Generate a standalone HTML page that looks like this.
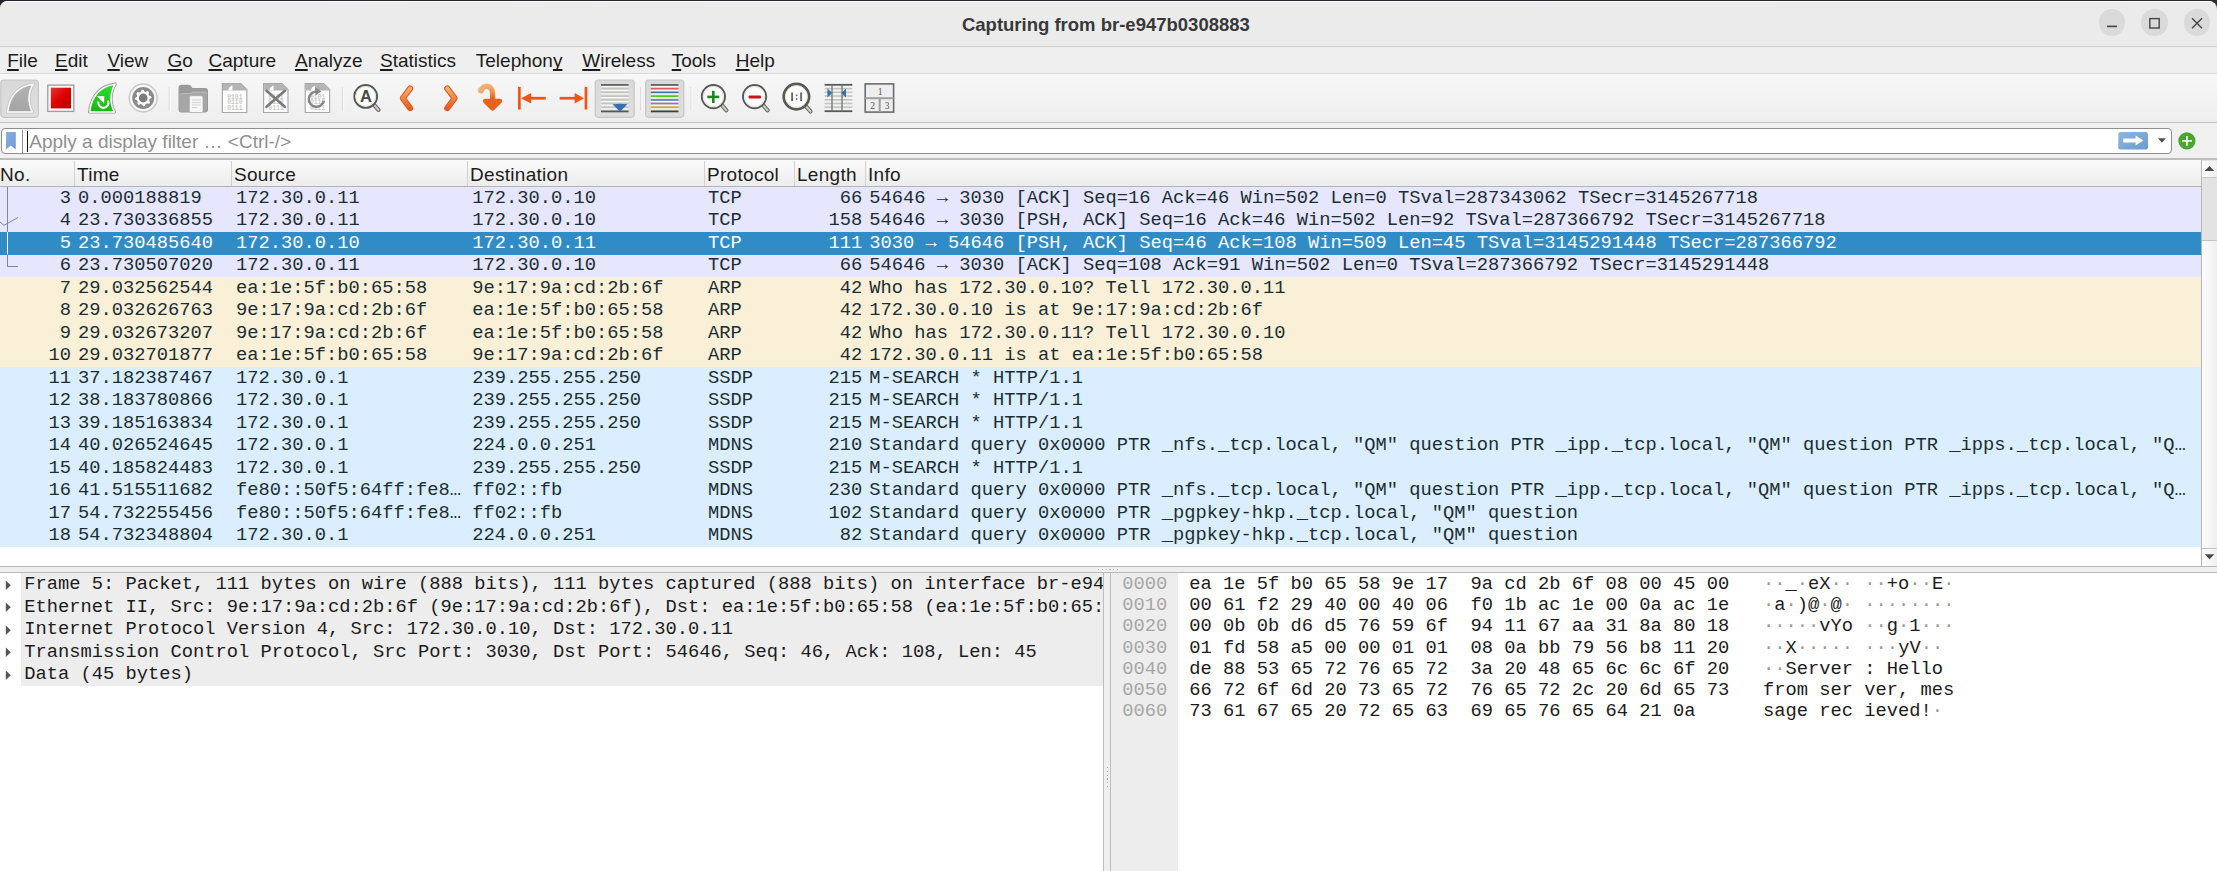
<!DOCTYPE html><html><head><meta charset="utf-8"><style>
*{margin:0;padding:0;box-sizing:border-box}
html,body{width:2217px;height:871px;overflow:hidden;background:linear-gradient(90deg,#20232f,#26272f 50%,#2a2a2a)}
#win{position:absolute;left:0;top:0;width:2217px;height:871px;overflow:hidden}
.ui{font-family:'Liberation Sans', sans-serif;font-size:19px;color:#1c1c1c;line-height:22px}
.mono{font-family:'Liberation Mono', monospace;font-size:18.75px;line-height:22.5px;white-space:pre}
.row{position:absolute;left:0;width:2201px;height:22.5px;color:#12272e}
.row span{position:absolute;top:-0.4px}
.u{text-decoration:underline;text-decoration-thickness:2.2px;text-underline-offset:2.2px;text-decoration-skip-ink:none}
</style></head><body><div id="win">
<div style="position:absolute;left:0px;top:20px;width:2217px;height:851px;background:#efefef"></div>
<div style="position:absolute;left:0px;top:1px;width:2217px;height:45px;background:#ebebeb;border-top:1px solid #ffffff;border-radius:7px 8px 0 0"></div>
<div style="position:absolute;left:0px;top:46px;width:2217px;height:1px;background:#cfcfcf"></div>
<div style="position:absolute;left:-2.6px;top:14.4px;white-space:pre;width:2217px;text-align:center;font-family:'Liberation Sans', sans-serif;font-weight:bold;font-size:18.5px;color:#383838;line-height:22px">Capturing from br-e947b0308883</div>
<div style="position:absolute;left:2098.8px;top:9.400000000000002px;width:26.4px;height:26.4px;border-radius:50%;background:#dadada"></div>
<div style="position:absolute;left:2141.3px;top:9.400000000000002px;width:26.4px;height:26.4px;border-radius:50%;background:#dadada"></div>
<div style="position:absolute;left:2183.8px;top:9.400000000000002px;width:26.4px;height:26.4px;border-radius:50%;background:#dadada"></div>
<svg style="position:absolute;left:0;top:0" width="2217" height="46"><rect x="2107" y="25.6" width="10" height="1.6" fill="#454545"/><rect x="2149.8" y="18.6" width="9.4" height="9.4" fill="none" stroke="#454545" stroke-width="1.4"/><path d="M2192 18.3 L2202 28.3 M2202 18.3 L2192 28.3" stroke="#454545" stroke-width="1.4"/></svg>
<div style="position:absolute;left:7.2px;top:50px;white-space:pre;font-family:'Liberation Sans', sans-serif;font-size:19px;color:#1c1c1c;line-height:22px"><span class="u">F</span>ile</div>
<div style="position:absolute;left:55px;top:50px;white-space:pre;font-family:'Liberation Sans', sans-serif;font-size:19px;color:#1c1c1c;line-height:22px"><span class="u">E</span>dit</div>
<div style="position:absolute;left:107.4px;top:50px;white-space:pre;font-family:'Liberation Sans', sans-serif;font-size:19px;color:#1c1c1c;line-height:22px"><span class="u">V</span>iew</div>
<div style="position:absolute;left:167.5px;top:50px;white-space:pre;font-family:'Liberation Sans', sans-serif;font-size:19px;color:#1c1c1c;line-height:22px"><span class="u">G</span>o</div>
<div style="position:absolute;left:208.5px;top:50px;white-space:pre;font-family:'Liberation Sans', sans-serif;font-size:19px;color:#1c1c1c;line-height:22px"><span class="u">C</span>apture</div>
<div style="position:absolute;left:295px;top:50px;white-space:pre;font-family:'Liberation Sans', sans-serif;font-size:19px;color:#1c1c1c;line-height:22px"><span class="u">A</span>nalyze</div>
<div style="position:absolute;left:380px;top:50px;white-space:pre;font-family:'Liberation Sans', sans-serif;font-size:19px;color:#1c1c1c;line-height:22px"><span class="u">S</span>tatistics</div>
<div style="position:absolute;left:475.8px;top:50px;white-space:pre;font-family:'Liberation Sans', sans-serif;font-size:19px;color:#1c1c1c;line-height:22px">Telephon<span class="u">y</span></div>
<div style="position:absolute;left:582.3px;top:50px;white-space:pre;font-family:'Liberation Sans', sans-serif;font-size:19px;color:#1c1c1c;line-height:22px"><span class="u">W</span>ireless</div>
<div style="position:absolute;left:671.7px;top:50px;white-space:pre;font-family:'Liberation Sans', sans-serif;font-size:19px;color:#1c1c1c;line-height:22px"><span class="u">T</span>ools</div>
<div style="position:absolute;left:735.7px;top:50px;white-space:pre;font-family:'Liberation Sans', sans-serif;font-size:19px;color:#1c1c1c;line-height:22px"><span class="u">H</span>elp</div>
<div style="position:absolute;left:0px;top:73px;width:2217px;height:1px;background:#dadada"></div>
<div style="position:absolute;left:0px;top:74px;width:2217px;height:48px;background:linear-gradient(#f7f7f7,#eeeeee)"></div>
<div style="position:absolute;left:0px;top:122px;width:2217px;height:1px;background:#c2c2c2"></div>
<svg style="position:absolute;left:0;top:0" width="910" height="123"><defs><linearGradient id="gfin" x1="0" y1="0" x2="0" y2="1"><stop offset="0" stop-color="#b3b3b3"/><stop offset="1" stop-color="#a4a4a4"/></linearGradient><linearGradient id="ggreen" x1="0" y1="0" x2="0" y2="1"><stop offset="0" stop-color="#2ee02a"/><stop offset="1" stop-color="#14b814"/></linearGradient><linearGradient id="gred" x1="0" y1="0" x2="1" y2="1"><stop offset="0" stop-color="#e83434"/><stop offset="0.5" stop-color="#dd0000"/><stop offset="1" stop-color="#b80000"/></linearGradient><linearGradient id="gor" x1="0" y1="0" x2="0" y2="1"><stop offset="0" stop-color="#f4b070"/><stop offset="1" stop-color="#e85c1c"/></linearGradient><linearGradient id="gbtn" x1="0" y1="0" x2="0" y2="1"><stop offset="0" stop-color="#d9d9d9"/><stop offset="1" stop-color="#dedede"/></linearGradient></defs><rect x="0.8" y="80" width="37.6" height="37.3" rx="3.2" fill="url(#gbtn)" stroke="#c6c6c6" stroke-width="1.2"/><rect x="595.2" y="80" width="39.0" height="37.3" rx="3.2" fill="url(#gbtn)" stroke="#c6c6c6" stroke-width="1.2"/><rect x="645.6" y="80" width="38.19999999999993" height="37.3" rx="3.2" fill="url(#gbtn)" stroke="#c6c6c6" stroke-width="1.2"/><path d="M7.6,111.9 C9.5,96 17,86.5 33.2,84.2 C28.2,92 27.4,103 32.4,111.9 Z" fill="none" stroke="#c4c4c4" stroke-width="3.2" stroke-linejoin="round"/><path d="M7.6,111.9 C9.5,96 17,86.5 33.2,84.2 C28.2,92 27.4,103 32.4,111.9 Z" fill="url(#gfin)" stroke="#ffffff" stroke-width="1.5" stroke-linejoin="round"/><rect x="47.8" y="85.1" width="26" height="26.3" fill="#fbfbfb" stroke="#9c9c9c" stroke-width="1.3"/><rect x="50.8" y="87.7" width="20.2" height="20.7" fill="url(#gred)"/><path d="M89.6,111.9 C91.5,96 99,86.5 115.2,84.2 C110.2,92 109.4,103 114.4,111.9 Z" fill="none" stroke="#9a9a9a" stroke-width="3.2" stroke-linejoin="round"/><path d="M89.6,111.9 C91.5,96 99,86.5 115.2,84.2 C110.2,92 109.4,103 114.4,111.9 Z" fill="url(#ggreen)" stroke="#ffffff" stroke-width="1.5" stroke-linejoin="round"/><path d="M98.4,101.6 A5.1,5.1 0 1 0 107.9,100.4" fill="none" stroke="#ffffff" stroke-width="2.1"/><path d="M96.9,96.3 L104.3,95.9 L104.1,103.2 Z" fill="#ffffff"/><circle cx="143.2" cy="98" r="13.9" fill="#fafafa" stroke="#c8c8c8" stroke-width="1.5"/><circle cx="143.2" cy="98" r="11" fill="#8a8a8a"/><polygon points="151.34,96.38 151.50,98.00 149.58,99.27 149.21,100.49 150.10,102.61 149.07,103.87 146.81,103.40 145.69,104.01 144.82,106.14 143.20,106.30 141.93,104.38 140.71,104.01 138.59,104.90 137.33,103.87 137.80,101.61 137.19,100.49 135.06,99.62 134.90,98.00 136.82,96.73 137.19,95.51 136.30,93.39 137.33,92.13 139.59,92.60 140.71,91.99 141.58,89.86 143.20,89.70 144.47,91.62 145.69,91.99 147.81,91.10 149.07,92.13 148.60,94.39 149.21,95.51" fill="#ffffff"/><circle cx="143.2" cy="98" r="4.4" fill="#7c7c7c"/><rect x="168.7" y="87" width="1" height="24" fill="#d6d6d6"/><rect x="169.7" y="87" width="1" height="24" fill="#fbfbfb"/><rect x="342.2" y="87" width="1" height="24" fill="#d6d6d6"/><rect x="343.2" y="87" width="1" height="24" fill="#fbfbfb"/><rect x="640.2" y="87" width="1" height="24" fill="#d6d6d6"/><rect x="641.2" y="87" width="1" height="24" fill="#fbfbfb"/><rect x="690.5" y="87" width="1" height="24" fill="#d6d6d6"/><rect x="691.5" y="87" width="1" height="24" fill="#fbfbfb"/><path d="M178.5,88 Q178.5,84.8 181.5,84.8 H188.5 Q190.5,84.8 191.5,86.8 L192.5,88 H205 Q208,88 208,91 V109.5 Q208,112.5 205,112.5 H181.5 Q178.5,112.5 178.5,109.5 Z" fill="#9a9a9a"/><path d="M179.5,109.5 V95 Q179.5,93 181.5,93 H190.5 L192.5,91.5 H205 Q207,91.5 207,93.5 V109.5 Q207,111.8 204.5,111.8 H182 Q179.5,111.8 179.5,109.5Z" fill="#a6a6a6"/><path d="M180.5,94.5 Q180.5,93.6 182,93.6 H190.6 L192.6,92.2 H205 Q206.3,92.2 206.3,93.5" fill="none" stroke="#bdbdbd" stroke-width="0.9"/><rect x="189.4" y="95.7" width="13.6" height="16.8" rx="1.5" fill="#f6f6f6" stroke="#a8a8a8" stroke-width="0.7"/><rect x="192" y="99.5" width="9" height="0.9" fill="#cfcfcf"/><rect x="192" y="102" width="9" height="0.9" fill="#cfcfcf"/><rect x="192" y="104.5" width="9" height="0.9" fill="#cfcfcf"/><rect x="192" y="107" width="5" height="0.9" fill="#cfcfcf"/><path d="M222.4,83.5 H240.8 L246.8,89.5 V112.5 H222.4 Z" fill="#ffffff" stroke="#a8a8a8" stroke-width="1.2"/><path d="M223.0,84.1 H240.60000000000002 L246.20000000000002,89.8 V90.5 H223.0 Z" fill="#b4b4b4"/><path d="M228.4,90.5 C228.4,87 231.4,86 232.4,85.5 L232.4,90.5Z" fill="#ffffff"/><text x="234.8" y="98.6" font-family="Liberation Mono" font-weight="bold" font-size="6.4" fill="#cacaca" text-anchor="middle">0101</text><text x="234.8" y="104" font-family="Liberation Mono" font-weight="bold" font-size="6.4" fill="#cacaca" text-anchor="middle">0110</text><text x="234.8" y="109.6" font-family="Liberation Mono" font-weight="bold" font-size="6.4" fill="#cacaca" text-anchor="middle">0111</text><path d="M263.6,83.5 H282.0 L288.0,89.5 V112.5 H263.6 Z" fill="#ffffff" stroke="#a8a8a8" stroke-width="1.2"/><path d="M264.20000000000005,84.1 H281.8 L287.4,89.8 V90.5 H264.20000000000005 Z" fill="#b4b4b4"/><path d="M269.6,90.5 C269.6,87 272.6,86 273.6,85.5 L273.6,90.5Z" fill="#ffffff"/><text x="276.0" y="98.6" font-family="Liberation Mono" font-weight="bold" font-size="6.4" fill="#cacaca" text-anchor="middle">0101</text><text x="276.0" y="104" font-family="Liberation Mono" font-weight="bold" font-size="6.4" fill="#cacaca" text-anchor="middle">0110</text><text x="276.0" y="109.6" font-family="Liberation Mono" font-weight="bold" font-size="6.4" fill="#cacaca" text-anchor="middle">0111</text><path d="M266.5,90.8 L284.8,106.8 M284.8,90.8 L266.5,106.8" stroke="#7a7a7a" stroke-width="2.6" stroke-linecap="round"/><path d="M305.2,83.5 H323.59999999999997 L329.59999999999997,89.5 V112.5 H305.2 Z" fill="#ffffff" stroke="#a8a8a8" stroke-width="1.2"/><path d="M305.8,84.1 H323.4 L328.99999999999994,89.8 V90.5 H305.8 Z" fill="#b4b4b4"/><path d="M311.2,90.5 C311.2,87 314.2,86 315.2,85.5 L315.2,90.5Z" fill="#ffffff"/><text x="317.59999999999997" y="98.6" font-family="Liberation Mono" font-weight="bold" font-size="6.4" fill="#cacaca" text-anchor="middle">0101</text><text x="317.59999999999997" y="104" font-family="Liberation Mono" font-weight="bold" font-size="6.4" fill="#cacaca" text-anchor="middle">0110</text><text x="317.59999999999997" y="109.6" font-family="Liberation Mono" font-weight="bold" font-size="6.4" fill="#cacaca" text-anchor="middle">0111</text><path d="M323.8,100.8 A7.6,7.6 0 1 1 316.6,91.6" fill="none" stroke="#858585" stroke-width="2.4"/><path d="M315.2,87.2 L321.2,91.2 L315.6,95.4 Z" fill="#858585"/><path d="M373.68,104.38000000000001 L378.468,109.852" stroke="#6a6a66" stroke-width="4.2" stroke-linecap="round"/><path d="M373.68,104.38000000000001 L378.468,109.852" stroke="#cfcfc4" stroke-width="2" stroke-linecap="round"/><circle cx="365.7" cy="96.4" r="11.4" fill="#fdfdfb" stroke="#585856" stroke-width="1.9"/><circle cx="365.7" cy="96.4" r="9.8" fill="none" stroke="#e6e4d8" stroke-width="1"/><text x="365.9" y="102.2" font-family="Liberation Sans" font-weight="bold" font-size="16.5" fill="#484848" text-anchor="middle">A</text><path d="M410.2,88.4 L402.8,98.3 L410.2,108.2" fill="none" stroke="#d9561a" stroke-width="6" stroke-linecap="round" stroke-linejoin="round"/><path d="M410.2,88.4 L402.8,98.3 L410.2,108.2" fill="none" stroke="url(#gor)" stroke-width="4" stroke-linecap="round" stroke-linejoin="round"/><path d="M447.2,88.4 L454.6,98.3 L447.2,108.2" fill="none" stroke="#d9561a" stroke-width="6" stroke-linecap="round" stroke-linejoin="round"/><path d="M447.2,88.4 L454.6,98.3 L447.2,108.2" fill="none" stroke="url(#gor)" stroke-width="4" stroke-linecap="round" stroke-linejoin="round"/><path d="M481.2,90.8 C482.5,84.5 492.6,84 492.6,94.5 V100" fill="none" stroke="url(#gor)" stroke-width="5.2" stroke-linecap="round"/><circle cx="480.8" cy="90.2" r="3" fill="#f3b27a" opacity="0.8"/><path d="M485.2,101 L499.9,101 L492.6,108.4 Z" fill="#e8621e" stroke="#e8621e" stroke-width="4.6" stroke-linejoin="round"/><rect x="518" y="86.9" width="2.7" height="22.6" fill="#f25512"/><path d="M521,98.2 L531.2,93 L531.2,103.4 Z" fill="#f25512"/><rect x="530" y="96.9" width="15.8" height="2.7" fill="#f25512"/><rect x="584.6" y="86.9" width="2.7" height="22.6" fill="#f25512"/><path d="M584,98.2 L574.6,93 L574.6,103.4 Z" fill="#f25512"/><rect x="559.6" y="96.9" width="15.8" height="2.7" fill="#f25512"/><rect x="601" y="84.1" width="27.6" height="1.8" fill="#555a5a"/><rect x="601" y="85.9" width="27.6" height="1.2" fill="#f8f8f8"/><rect x="601" y="87.95" width="27.6" height="1.7" fill="#c3c6bc"/><rect x="601" y="89.64999999999999" width="27.6" height="1.2" fill="#f8f8f8"/><rect x="601" y="91.65" width="27.6" height="1.7" fill="#c3c6bc"/><rect x="601" y="93.35" width="27.6" height="1.2" fill="#f8f8f8"/><rect x="601" y="95.35000000000001" width="27.6" height="1.7" fill="#c3c6bc"/><rect x="601" y="97.05" width="27.6" height="1.2" fill="#f8f8f8"/><rect x="601" y="99.15" width="27.6" height="1.7" fill="#c3c6bc"/><rect x="601" y="100.85" width="27.6" height="1.2" fill="#f8f8f8"/><rect x="601" y="102.85000000000001" width="27.6" height="1.7" fill="#c3c6bc"/><rect x="601" y="104.55" width="27.6" height="1.2" fill="#f8f8f8"/><rect x="601" y="106.55000000000001" width="27.6" height="1.7" fill="#c3c6bc"/><rect x="601" y="108.25" width="27.6" height="1.2" fill="#f8f8f8"/><rect x="601" y="110.5" width="27.6" height="1.8" fill="#555a5a"/><path d="M612.6,104.3 Q620,103.2 627.4,104.3 L620,111.8 Z" fill="#3a6fb4"/><rect x="650.8" y="84.1" width="27.6" height="1.8" fill="#555a5a"/><rect x="650.8" y="85.9" width="27.6" height="1.2" fill="#f8f8f8"/><rect x="650.8" y="87.89999999999999" width="27.6" height="1.8" fill="#e55a5a"/><rect x="650.8" y="89.7" width="27.6" height="1.2" fill="#f8f8f8"/><rect x="650.8" y="91.6" width="27.6" height="1.8" fill="#3d6fb4"/><rect x="650.8" y="93.4" width="27.6" height="1.2" fill="#f8f8f8"/><rect x="650.8" y="95.3" width="27.6" height="1.8" fill="#4ccc22"/><rect x="650.8" y="97.10000000000001" width="27.6" height="1.2" fill="#f8f8f8"/><rect x="650.8" y="99.1" width="27.6" height="1.8" fill="#5a84c0"/><rect x="650.8" y="100.9" width="27.6" height="1.2" fill="#f8f8f8"/><rect x="650.8" y="102.8" width="27.6" height="1.8" fill="#9a74a0"/><rect x="650.8" y="104.60000000000001" width="27.6" height="1.2" fill="#f8f8f8"/><rect x="650.8" y="106.5" width="27.6" height="1.8" fill="#d4a820"/><rect x="650.8" y="108.30000000000001" width="27.6" height="1.2" fill="#f8f8f8"/><rect x="650.8" y="110.5" width="27.6" height="1.8" fill="#3c4040"/><path d="M721.52,104.72 L726.3919999999999,110.288" stroke="#6a6a66" stroke-width="4.2" stroke-linecap="round"/><path d="M721.52,104.72 L726.3919999999999,110.288" stroke="#cfcfc4" stroke-width="2" stroke-linecap="round"/><circle cx="713.4" cy="96.6" r="11.6" fill="#fdfdfb" stroke="#585856" stroke-width="1.9"/><circle cx="713.4" cy="96.6" r="10.0" fill="none" stroke="#e6e4d8" stroke-width="1"/><rect x="707.3" y="95.6" width="12" height="2.6" fill="#1a8a20"/><rect x="712" y="90.8" width="2.6" height="12.2" fill="#1a8a20"/><path d="M762.72,104.72 L767.592,110.288" stroke="#6a6a66" stroke-width="4.2" stroke-linecap="round"/><path d="M762.72,104.72 L767.592,110.288" stroke="#cfcfc4" stroke-width="2" stroke-linecap="round"/><circle cx="754.6" cy="96.6" r="11.6" fill="#fdfdfb" stroke="#585856" stroke-width="1.9"/><circle cx="754.6" cy="96.6" r="10.0" fill="none" stroke="#e6e4d8" stroke-width="1"/><rect x="748.6" y="95.6" width="12.4" height="2.8" rx="1" fill="#cc1020"/><path d="M805.22,105.41999999999999 L810.512,111.46799999999999" stroke="#6a6a66" stroke-width="4.2" stroke-linecap="round"/><path d="M805.22,105.41999999999999 L810.512,111.46799999999999" stroke="#cfcfc4" stroke-width="2" stroke-linecap="round"/><circle cx="796.4" cy="96.6" r="12.6" fill="#fdfdfb" stroke="#585856" stroke-width="2.9"/><circle cx="796.4" cy="96.6" r="11.0" fill="none" stroke="#e6e4d8" stroke-width="1"/><rect x="791.2" y="92.5" width="1.8" height="8.6" fill="#666"/><rect x="800.2" y="92.5" width="1.8" height="8.6" fill="#666"/><rect x="795.8" y="94.6" width="1.6" height="1.6" fill="#666"/><rect x="795.8" y="98.2" width="1.6" height="1.6" fill="#666"/><rect x="824.6" y="83.89999999999999" width="27.7" height="1.8" fill="#555a5a"/><rect x="824.6" y="87.8" width="27.7" height="1.6" fill="#c3c6bc"/><rect x="824.6" y="91.5" width="27.7" height="1.6" fill="#c3c6bc"/><rect x="824.6" y="95.2" width="27.7" height="1.6" fill="#c3c6bc"/><rect x="824.6" y="99.0" width="27.7" height="1.6" fill="#c3c6bc"/><rect x="824.6" y="102.7" width="27.7" height="1.6" fill="#c3c6bc"/><rect x="824.6" y="106.4" width="27.7" height="1.6" fill="#c3c6bc"/><rect x="824.6" y="110.3" width="27.7" height="1.8" fill="#555a5a"/><rect x="831.4" y="84.5" width="1.2" height="27.2" fill="#6a6e6e"/><rect x="841.4" y="84.5" width="1.2" height="27.2" fill="#6a6e6e"/><path d="M827.4,88.6 L832.3,93 L827.4,97.4 Z" fill="#3a6fb4"/><path d="M846,88.6 L841.2,93 L846,97.4 Z" fill="#3a6fb4"/><rect x="865.2" y="83.9" width="28.4" height="28.2" fill="#eeeeee" stroke="#6c6c6c" stroke-width="1.6"/><rect x="865.2" y="97.2" width="28.4" height="2" fill="#a0a0a0"/><rect x="878.7" y="98" width="2" height="14" fill="#a0a0a0"/><text x="880" y="94.5" font-family="Liberation Serif" font-size="9.5" fill="#555" text-anchor="middle">1</text><text x="872.5" y="109" font-family="Liberation Serif" font-size="9.5" fill="#555" text-anchor="middle">2</text><text x="887" y="109" font-family="Liberation Serif" font-size="9.5" fill="#555" text-anchor="middle">3</text></svg>
<div style="position:absolute;left:0px;top:123px;width:2217px;height:35px;background:#f0f0f0"></div>
<div style="position:absolute;left:1px;top:128px;width:2171px;height:26px;background:#fff;border:1.5px solid #8e8e8e;border-radius:4px"></div>
<div style="position:absolute;left:22px;top:129.5px;width:1px;height:23px;background:#8e8e8e"></div>
<div style="position:absolute;left:27px;top:131px;width:1.4px;height:21px;background:#111"></div>
<div style="position:absolute;left:29.3px;top:131px;white-space:pre;font-family:'Liberation Sans', sans-serif;font-size:19px;color:#8f8f8f;line-height:22px">Apply a display filter … &lt;Ctrl-/&gt;</div>
<svg style="position:absolute;left:0;top:120px" width="2217" height="40"><defs><linearGradient id="gbm" x1="0" y1="0" x2="1" y2="1"><stop offset="0" stop-color="#8ab2e0"/><stop offset="1" stop-color="#6a9ad2"/></linearGradient><linearGradient id="gap" x1="0" y1="0" x2="1" y2="1"><stop offset="0" stop-color="#90b6df"/><stop offset="1" stop-color="#6a9bd0"/></linearGradient></defs><path d="M6,12 H15.8 V29.5 L10.9,25.6 L6,29.5 Z" fill="url(#gbm)"/><rect x="2118.3" y="12.1" width="29.7" height="17.3" rx="2.2" fill="url(#gap)"/><path d="M2123.2,18.6 H2135.6 V15.6 L2143.3,20.6 L2135.6,25.6 V22.6 H2123.2 Z" fill="#ffffff"/><path d="M2158,18.3 H2165.8 L2161.9,22.7 Z" fill="#505050"/><circle cx="2186.9" cy="20.8" r="8.6" fill="#46a82c"/><rect x="2182" y="20" width="9.8" height="1.7" fill="#ffffff"/><rect x="2186.05" y="16" width="1.7" height="9.8" fill="#ffffff"/></svg>
<div style="position:absolute;left:0px;top:158px;width:2217px;height:2px;background:#bdbdbd"></div>
<div style="position:absolute;left:0px;top:160px;width:2201px;height:26px;background:linear-gradient(#fbfbfb,#ececec)"></div>
<div style="position:absolute;left:0px;top:186px;width:2201px;height:1px;background:#b4b4b4"></div>
<div style="position:absolute;left:0px;top:164px;white-space:pre;font-family:'Liberation Sans', sans-serif;font-size:19px;letter-spacing:0.3px;color:#1c1c1c;line-height:22px">No.</div>
<div style="position:absolute;left:73.5px;top:161px;width:1px;height:25px;background:#d2d2d2"></div>
<div style="position:absolute;left:77px;top:164px;white-space:pre;font-family:'Liberation Sans', sans-serif;font-size:19px;letter-spacing:0.3px;color:#1c1c1c;line-height:22px">Time</div>
<div style="position:absolute;left:230.5px;top:161px;width:1px;height:25px;background:#d2d2d2"></div>
<div style="position:absolute;left:234px;top:164px;white-space:pre;font-family:'Liberation Sans', sans-serif;font-size:19px;letter-spacing:0.3px;color:#1c1c1c;line-height:22px">Source</div>
<div style="position:absolute;left:466.5px;top:161px;width:1px;height:25px;background:#d2d2d2"></div>
<div style="position:absolute;left:470px;top:164px;white-space:pre;font-family:'Liberation Sans', sans-serif;font-size:19px;letter-spacing:0.3px;color:#1c1c1c;line-height:22px">Destination</div>
<div style="position:absolute;left:703.5px;top:161px;width:1px;height:25px;background:#d2d2d2"></div>
<div style="position:absolute;left:707px;top:164px;white-space:pre;font-family:'Liberation Sans', sans-serif;font-size:19px;letter-spacing:0.3px;color:#1c1c1c;line-height:22px">Protocol</div>
<div style="position:absolute;left:793.5px;top:161px;width:1px;height:25px;background:#d2d2d2"></div>
<div style="position:absolute;left:797px;top:164px;white-space:pre;font-family:'Liberation Sans', sans-serif;font-size:19px;letter-spacing:0.3px;color:#1c1c1c;line-height:22px">Length</div>
<div style="position:absolute;left:864.5px;top:161px;width:1px;height:25px;background:#d2d2d2"></div>
<div style="position:absolute;left:868px;top:164px;white-space:pre;font-family:'Liberation Sans', sans-serif;font-size:19px;letter-spacing:0.3px;color:#1c1c1c;line-height:22px">Info</div>
<div style="position:absolute;left:0px;top:187px;width:2201px;height:380px;background:#ffffff"></div>
<div class="row mono" style="top:187.0px;background:#e7e6ff;color:#1b2e34"><span style="left:59.75px">3</span><span style="left:78px">0.000188819</span><span style="left:236px">172.30.0.11</span><span style="left:472.2px">172.30.0.10</span><span style="left:708px">TCP</span><span style="left:839.7px">66</span><span style="left:869.2px">54646 → 3030 [ACK] Seq=16 Ack=46 Win=502 Len=0 TSval=287343062 TSecr=3145267718</span></div>
<div class="row mono" style="top:209.5px;background:#e7e6ff;color:#1b2e34"><span style="left:59.75px">4</span><span style="left:78px">23.730336855</span><span style="left:236px">172.30.0.11</span><span style="left:472.2px">172.30.0.10</span><span style="left:708px">TCP</span><span style="left:828.45px">158</span><span style="left:869.2px">54646 → 3030 [PSH, ACK] Seq=16 Ack=46 Win=502 Len=92 TSval=287366792 TSecr=3145267718</span></div>
<div class="row mono" style="top:232.0px;background:#308cc6;color:#ffffff"><span style="left:59.75px">5</span><span style="left:78px">23.730485640</span><span style="left:236px">172.30.0.10</span><span style="left:472.2px">172.30.0.11</span><span style="left:708px">TCP</span><span style="left:828.45px">111</span><span style="left:869.2px">3030 → 54646 [PSH, ACK] Seq=46 Ack=108 Win=509 Len=45 TSval=3145291448 TSecr=287366792</span></div>
<div class="row mono" style="top:254.5px;background:#e7e6ff;color:#1b2e34"><span style="left:59.75px">6</span><span style="left:78px">23.730507020</span><span style="left:236px">172.30.0.11</span><span style="left:472.2px">172.30.0.10</span><span style="left:708px">TCP</span><span style="left:839.7px">66</span><span style="left:869.2px">54646 → 3030 [ACK] Seq=108 Ack=91 Win=502 Len=0 TSval=287366792 TSecr=3145291448</span></div>
<div class="row mono" style="top:277.0px;background:#faf0d7;color:#1b2e34"><span style="left:59.75px">7</span><span style="left:78px">29.032562544</span><span style="left:236px">ea:1e:5f:b0:65:58</span><span style="left:472.2px">9e:17:9a:cd:2b:6f</span><span style="left:708px">ARP</span><span style="left:839.7px">42</span><span style="left:869.2px">Who has 172.30.0.10? Tell 172.30.0.11</span></div>
<div class="row mono" style="top:299.5px;background:#faf0d7;color:#1b2e34"><span style="left:59.75px">8</span><span style="left:78px">29.032626763</span><span style="left:236px">9e:17:9a:cd:2b:6f</span><span style="left:472.2px">ea:1e:5f:b0:65:58</span><span style="left:708px">ARP</span><span style="left:839.7px">42</span><span style="left:869.2px">172.30.0.10 is at 9e:17:9a:cd:2b:6f</span></div>
<div class="row mono" style="top:322.0px;background:#faf0d7;color:#1b2e34"><span style="left:59.75px">9</span><span style="left:78px">29.032673207</span><span style="left:236px">9e:17:9a:cd:2b:6f</span><span style="left:472.2px">ea:1e:5f:b0:65:58</span><span style="left:708px">ARP</span><span style="left:839.7px">42</span><span style="left:869.2px">Who has 172.30.0.11? Tell 172.30.0.10</span></div>
<div class="row mono" style="top:344.5px;background:#faf0d7;color:#1b2e34"><span style="left:48.5px">10</span><span style="left:78px">29.032701877</span><span style="left:236px">ea:1e:5f:b0:65:58</span><span style="left:472.2px">9e:17:9a:cd:2b:6f</span><span style="left:708px">ARP</span><span style="left:839.7px">42</span><span style="left:869.2px">172.30.0.11 is at ea:1e:5f:b0:65:58</span></div>
<div class="row mono" style="top:367.0px;background:#daeeff;color:#1b2e34"><span style="left:48.5px">11</span><span style="left:78px">37.182387467</span><span style="left:236px">172.30.0.1</span><span style="left:472.2px">239.255.255.250</span><span style="left:708px">SSDP</span><span style="left:828.45px">215</span><span style="left:869.2px">M-SEARCH * HTTP/1.1</span></div>
<div class="row mono" style="top:389.5px;background:#daeeff;color:#1b2e34"><span style="left:48.5px">12</span><span style="left:78px">38.183780866</span><span style="left:236px">172.30.0.1</span><span style="left:472.2px">239.255.255.250</span><span style="left:708px">SSDP</span><span style="left:828.45px">215</span><span style="left:869.2px">M-SEARCH * HTTP/1.1</span></div>
<div class="row mono" style="top:412.0px;background:#daeeff;color:#1b2e34"><span style="left:48.5px">13</span><span style="left:78px">39.185163834</span><span style="left:236px">172.30.0.1</span><span style="left:472.2px">239.255.255.250</span><span style="left:708px">SSDP</span><span style="left:828.45px">215</span><span style="left:869.2px">M-SEARCH * HTTP/1.1</span></div>
<div class="row mono" style="top:434.5px;background:#daeeff;color:#1b2e34"><span style="left:48.5px">14</span><span style="left:78px">40.026524645</span><span style="left:236px">172.30.0.1</span><span style="left:472.2px">224.0.0.251</span><span style="left:708px">MDNS</span><span style="left:828.45px">210</span><span style="left:869.2px">Standard query 0x0000 PTR _nfs._tcp.local, &quot;QM&quot; question PTR _ipp._tcp.local, &quot;QM&quot; question PTR _ipps._tcp.local, &quot;Q…</span></div>
<div class="row mono" style="top:457.0px;background:#daeeff;color:#1b2e34"><span style="left:48.5px">15</span><span style="left:78px">40.185824483</span><span style="left:236px">172.30.0.1</span><span style="left:472.2px">239.255.255.250</span><span style="left:708px">SSDP</span><span style="left:828.45px">215</span><span style="left:869.2px">M-SEARCH * HTTP/1.1</span></div>
<div class="row mono" style="top:479.5px;background:#daeeff;color:#1b2e34"><span style="left:48.5px">16</span><span style="left:78px">41.515511682</span><span style="left:236px">fe80::50f5:64ff:fe8…</span><span style="left:472.2px">ff02::fb</span><span style="left:708px">MDNS</span><span style="left:828.45px">230</span><span style="left:869.2px">Standard query 0x0000 PTR _nfs._tcp.local, &quot;QM&quot; question PTR _ipp._tcp.local, &quot;QM&quot; question PTR _ipps._tcp.local, &quot;Q…</span></div>
<div class="row mono" style="top:502.0px;background:#daeeff;color:#1b2e34"><span style="left:48.5px">17</span><span style="left:78px">54.732255456</span><span style="left:236px">fe80::50f5:64ff:fe8…</span><span style="left:472.2px">ff02::fb</span><span style="left:708px">MDNS</span><span style="left:828.45px">102</span><span style="left:869.2px">Standard query 0x0000 PTR _pgpkey-hkp._tcp.local, &quot;QM&quot; question</span></div>
<div class="row mono" style="top:524.5px;background:#daeeff;color:#1b2e34"><span style="left:48.5px">18</span><span style="left:78px">54.732348804</span><span style="left:236px">172.30.0.1</span><span style="left:472.2px">224.0.0.251</span><span style="left:708px">MDNS</span><span style="left:839.7px">82</span><span style="left:869.2px">Standard query 0x0000 PTR _pgpkey-hkp._tcp.local, &quot;QM&quot; question</span></div>
<svg style="position:absolute;left:0;top:187px" width="30" height="90"><path d="M7.5 0 V45" stroke="#7f8790" stroke-width="1"/><path d="M7.5 67.5 V79.5 H18" fill="none" stroke="#7f8790" stroke-width="1"/><path d="M7.5 45 V67.5" stroke="#ffffff" stroke-width="1"/><path d="M0 35 L4 38.3 L18 30.5" fill="none" stroke="#7f8790" stroke-width="1"/></svg>
<div style="position:absolute;left:2201px;top:160px;width:16px;height:406px;background:#e3e3e3;border-left:1px solid #b8b8b8"></div>
<div style="position:absolute;left:2202px;top:161px;width:15px;height:16.5px;background:linear-gradient(90deg,#fdfdfd,#efefef);border-bottom:1px solid #c8c8c8"></div>
<div style="position:absolute;left:2202px;top:240px;width:15px;height:309px;background:linear-gradient(90deg,#fdfdfd,#efefef);border-top:1px solid #c4c4c4;border-bottom:1px solid #c4c4c4"></div>
<div style="position:absolute;left:2202px;top:549px;width:15px;height:17px;background:linear-gradient(90deg,#fdfdfd,#efefef)"></div>
<svg style="position:absolute;left:2201px;top:160px" width="16" height="406"><path d="M3.7 11 L8.5 6 L13.3 11Z" fill="#4a4a4a"/><path d="M3.7 394.3 L8.5 399.3 L13.3 394.3Z" fill="#4a4a4a"/></svg>
<div style="position:absolute;left:0px;top:566px;width:2217px;height:1px;background:#b8b8b8"></div>
<div style="position:absolute;left:0px;top:567px;width:2217px;height:5px;background:#efefef"></div>
<div style="position:absolute;left:0px;top:572px;width:2217px;height:1px;background:#b8b8b8"></div>
<div style="position:absolute;left:1098.0px;top:568.5px;width:1.2px;height:1.2px;background:#b0b0b0"></div>
<div style="position:absolute;left:1101.8px;top:568.5px;width:1.2px;height:1.2px;background:#b0b0b0"></div>
<div style="position:absolute;left:1105.6px;top:568.5px;width:1.2px;height:1.2px;background:#b0b0b0"></div>
<div style="position:absolute;left:1109.4px;top:568.5px;width:1.2px;height:1.2px;background:#b0b0b0"></div>
<div style="position:absolute;left:1113.2px;top:568.5px;width:1.2px;height:1.2px;background:#b0b0b0"></div>
<div style="position:absolute;left:1117.0px;top:568.5px;width:1.2px;height:1.2px;background:#b0b0b0"></div>
<div style="position:absolute;left:0px;top:573px;width:1104px;height:298px;background:#ffffff"></div>
<div style="position:absolute;left:21px;top:573px;width:1083px;height:112.5px;background:#ededed"></div>
<div style="position:absolute;left:0;top:573px;width:1103px;height:298px;overflow:hidden">
<div class="mono" style="position:absolute;left:24.2px;top:0.0px;color:#1c1c1c">Frame 5: Packet, 111 bytes on wire (888 bits), 111 bytes captured (888 bits) on interface br-e947b0308883, id 0</div>
<svg style="position:absolute;left:5px;top:6.5px" width="7" height="11"><path d="M0.8 0.5 L5.8 5.3 L0.8 10.1Z" fill="#555"/></svg>
<div class="mono" style="position:absolute;left:24.2px;top:22.5px;color:#1c1c1c">Ethernet II, Src: 9e:17:9a:cd:2b:6f (9e:17:9a:cd:2b:6f), Dst: ea:1e:5f:b0:65:58 (ea:1e:5f:b0:65:58)</div>
<svg style="position:absolute;left:5px;top:29.0px" width="7" height="11"><path d="M0.8 0.5 L5.8 5.3 L0.8 10.1Z" fill="#555"/></svg>
<div class="mono" style="position:absolute;left:24.2px;top:45.0px;color:#1c1c1c">Internet Protocol Version 4, Src: 172.30.0.10, Dst: 172.30.0.11</div>
<svg style="position:absolute;left:5px;top:51.5px" width="7" height="11"><path d="M0.8 0.5 L5.8 5.3 L0.8 10.1Z" fill="#555"/></svg>
<div class="mono" style="position:absolute;left:24.2px;top:67.5px;color:#1c1c1c">Transmission Control Protocol, Src Port: 3030, Dst Port: 54646, Seq: 46, Ack: 108, Len: 45</div>
<svg style="position:absolute;left:5px;top:74.0px" width="7" height="11"><path d="M0.8 0.5 L5.8 5.3 L0.8 10.1Z" fill="#555"/></svg>
<div class="mono" style="position:absolute;left:24.2px;top:90.0px;color:#1c1c1c">Data (45 bytes)</div>
<svg style="position:absolute;left:5px;top:96.5px" width="7" height="11"><path d="M0.8 0.5 L5.8 5.3 L0.8 10.1Z" fill="#555"/></svg>
</div>
<div style="position:absolute;left:1103px;top:573px;width:1px;height:298px;background:#bdbdbd"></div>
<div style="position:absolute;left:1104px;top:573px;width:6px;height:298px;background:#efefef"></div>
<div style="position:absolute;left:1110px;top:573px;width:1px;height:298px;background:#bdbdbd"></div>
<div style="position:absolute;left:1106.8px;top:767.0px;width:1.2px;height:1.2px;background:#a8a8a8"></div>
<div style="position:absolute;left:1106.8px;top:770.8px;width:1.2px;height:1.2px;background:#a8a8a8"></div>
<div style="position:absolute;left:1106.8px;top:774.6px;width:1.2px;height:1.2px;background:#a8a8a8"></div>
<div style="position:absolute;left:1106.8px;top:778.4px;width:1.2px;height:1.2px;background:#a8a8a8"></div>
<div style="position:absolute;left:1106.8px;top:782.2px;width:1.2px;height:1.2px;background:#a8a8a8"></div>
<div style="position:absolute;left:1106.8px;top:786.0px;width:1.2px;height:1.2px;background:#a8a8a8"></div>
<div style="position:absolute;left:1111px;top:573px;width:1106px;height:298px;background:#ffffff"></div>
<div style="position:absolute;left:1111px;top:573px;width:67px;height:298px;background:#ededed"></div>
<div class="mono" style="position:absolute;left:1122.2px;top:573.9px;line-height:21.25px;color:#a6a6a6">0000</div>
<div class="mono" style="position:absolute;left:1189.2px;top:573.9px;line-height:21.25px;color:#1c1c1c">ea 1e 5f b0 65 58 9e 17  9a cd 2b 6f 08 00 45 00  </div>
<div class="mono" style="position:absolute;left:1762.95px;top:573.9px;line-height:21.25px;color:#1c1c1c"><span style="color:#9a9a9a">·</span><span style="color:#9a9a9a">·</span>_<span style="color:#9a9a9a">·</span>eX<span style="color:#9a9a9a">·</span><span style="color:#9a9a9a">·</span> <span style="color:#9a9a9a">·</span><span style="color:#9a9a9a">·</span>+o<span style="color:#9a9a9a">·</span><span style="color:#9a9a9a">·</span>E<span style="color:#9a9a9a">·</span></div>
<div class="mono" style="position:absolute;left:1122.2px;top:595.15px;line-height:21.25px;color:#a6a6a6">0010</div>
<div class="mono" style="position:absolute;left:1189.2px;top:595.15px;line-height:21.25px;color:#1c1c1c">00 61 f2 29 40 00 40 06  f0 1b ac 1e 00 0a ac 1e  </div>
<div class="mono" style="position:absolute;left:1762.95px;top:595.15px;line-height:21.25px;color:#1c1c1c"><span style="color:#9a9a9a">·</span>a<span style="color:#9a9a9a">·</span>)@<span style="color:#9a9a9a">·</span>@<span style="color:#9a9a9a">·</span> <span style="color:#9a9a9a">·</span><span style="color:#9a9a9a">·</span><span style="color:#9a9a9a">·</span><span style="color:#9a9a9a">·</span><span style="color:#9a9a9a">·</span><span style="color:#9a9a9a">·</span><span style="color:#9a9a9a">·</span><span style="color:#9a9a9a">·</span></div>
<div class="mono" style="position:absolute;left:1122.2px;top:616.4px;line-height:21.25px;color:#a6a6a6">0020</div>
<div class="mono" style="position:absolute;left:1189.2px;top:616.4px;line-height:21.25px;color:#1c1c1c">00 0b 0b d6 d5 76 59 6f  94 11 67 aa 31 8a 80 18  </div>
<div class="mono" style="position:absolute;left:1762.95px;top:616.4px;line-height:21.25px;color:#1c1c1c"><span style="color:#9a9a9a">·</span><span style="color:#9a9a9a">·</span><span style="color:#9a9a9a">·</span><span style="color:#9a9a9a">·</span><span style="color:#9a9a9a">·</span>vYo <span style="color:#9a9a9a">·</span><span style="color:#9a9a9a">·</span>g<span style="color:#9a9a9a">·</span>1<span style="color:#9a9a9a">·</span><span style="color:#9a9a9a">·</span><span style="color:#9a9a9a">·</span></div>
<div class="mono" style="position:absolute;left:1122.2px;top:637.65px;line-height:21.25px;color:#a6a6a6">0030</div>
<div class="mono" style="position:absolute;left:1189.2px;top:637.65px;line-height:21.25px;color:#1c1c1c">01 fd 58 a5 00 00 01 01  08 0a bb 79 56 b8 11 20  </div>
<div class="mono" style="position:absolute;left:1762.95px;top:637.65px;line-height:21.25px;color:#1c1c1c"><span style="color:#9a9a9a">·</span><span style="color:#9a9a9a">·</span>X<span style="color:#9a9a9a">·</span><span style="color:#9a9a9a">·</span><span style="color:#9a9a9a">·</span><span style="color:#9a9a9a">·</span><span style="color:#9a9a9a">·</span> <span style="color:#9a9a9a">·</span><span style="color:#9a9a9a">·</span><span style="color:#9a9a9a">·</span>yV<span style="color:#9a9a9a">·</span><span style="color:#9a9a9a">·</span> </div>
<div class="mono" style="position:absolute;left:1122.2px;top:658.9px;line-height:21.25px;color:#a6a6a6">0040</div>
<div class="mono" style="position:absolute;left:1189.2px;top:658.9px;line-height:21.25px;color:#1c1c1c">de 88 53 65 72 76 65 72  3a 20 48 65 6c 6c 6f 20  </div>
<div class="mono" style="position:absolute;left:1762.95px;top:658.9px;line-height:21.25px;color:#1c1c1c"><span style="color:#9a9a9a">·</span><span style="color:#9a9a9a">·</span>Server : Hello </div>
<div class="mono" style="position:absolute;left:1122.2px;top:680.15px;line-height:21.25px;color:#a6a6a6">0050</div>
<div class="mono" style="position:absolute;left:1189.2px;top:680.15px;line-height:21.25px;color:#1c1c1c">66 72 6f 6d 20 73 65 72  76 65 72 2c 20 6d 65 73  </div>
<div class="mono" style="position:absolute;left:1762.95px;top:680.15px;line-height:21.25px;color:#1c1c1c">from ser ver, mes</div>
<div class="mono" style="position:absolute;left:1122.2px;top:701.4px;line-height:21.25px;color:#a6a6a6">0060</div>
<div class="mono" style="position:absolute;left:1189.2px;top:701.4px;line-height:21.25px;color:#1c1c1c">73 61 67 65 20 72 65 63  69 65 76 65 64 21 0a     </div>
<div class="mono" style="position:absolute;left:1762.95px;top:701.4px;line-height:21.25px;color:#1c1c1c">sage rec ieved!<span style="color:#9a9a9a">·</span></div>
</div></body></html>
